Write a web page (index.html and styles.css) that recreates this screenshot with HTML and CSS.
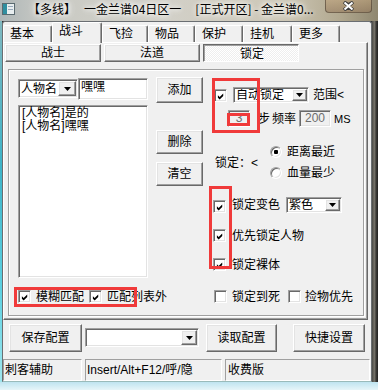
FILE: index.html
```html
<!DOCTYPE html>
<html>
<head>
<meta charset="utf-8">
<link rel="stylesheet" href="styles.css">
</head>
<body>
<div class="win">
  <div class="titlebar">
    <span class="appicon">
      <svg width="13" height="12" viewBox="0 0 13 12"><rect x="0.5" y="0.5" width="12" height="11" fill="#e8eef0" stroke="#5a6a70"/><rect x="1" y="1" width="4" height="10" fill="#2f8ea0"/><rect x="6" y="3" width="5" height="1" fill="#9ab"/><rect x="6" y="6" width="5" height="1" fill="#9ab"/></svg>
    </span>
    <span class="title"><span>【多线】</span><span class="t2">一金兰谱04日区一</span><span class="t3">[正式开区] - 金兰谱0...</span></span>
    <span class="closebtn">
      <svg width="13" height="10" viewBox="0 0 13 10"><path d="M2 1 L6.5 4 L11 1 M2 9 L6.5 6 L11 9 M6.5 5 L2 1 M6.5 5 L11 1 M6.5 5 L2 9 M6.5 5 L11 9" stroke="#3a3a3a" stroke-width="3.4" fill="none"/><path d="M2.5 1.5 L10.5 8.5 M10.5 1.5 L2.5 8.5" stroke="#fff" stroke-width="2" fill="none"/></svg>
    </span>
  </div>
  <div class="mid">
    <div class="glass-l"></div>
    <div class="client">
      <div class="tabs">
        <div class="tab">基本</div>
        <div class="tab sel">战斗</div>
        <div class="tab">飞捡</div>
        <div class="tab">物品</div>
        <div class="tab">保护</div>
        <div class="tab">挂机</div>
        <div class="tab">更多</div>
      </div>
      <div class="panel">
        <div class="btabs">
          <div class="btab raised">战士</div>
          <div class="btab raised">法道</div>
          <div class="btab pressed">锁定</div>
        </div>
        <div class="frame">
          <div class="col-left">
            <div class="row-top">
              <div class="combo combo-name"><span class="combo-text">人物名</span><span class="dd raised"><svg width="7" height="4" viewBox="0 0 7 4"><path d="M0 0H7L3.5 4Z"/></svg></span></div>
              <div class="edit edit-name sunken">嘿嘿</div>
              <div class="btn raised btn-add">添加</div>
            </div>
            <div class="row-list">
              <div class="list sunken">
                <div>[人物名]是的</div>
                <div>[人物名]嘿嘿</div>
              </div>
              <div class="btncol">
                <div class="btn raised btn-side">删除</div>
                <div class="btn raised btn-side">清空</div>
              </div>
            </div>
            <div class="row-match">
              <span class="cb sunken"><svg width="9" height="9" viewBox="0 0 9 9"><polygon points="1,3 3,5 7,1 7,4 3,8 1,6"/></svg></span>
              <span class="lbl m5">模糊匹配</span>
              <span class="cb sunken m5"><svg width="9" height="9" viewBox="0 0 9 9"><polygon points="1,3 3,5 7,1 7,4 3,8 1,6"/></svg></span>
              <span class="lbl m5">匹配列表外</span>
            </div>
          </div>
          <div class="col-right">
            <div class="r-auto">
              <span class="cb sunken cb-auto"><svg width="9" height="9" viewBox="0 0 9 9"><polygon points="1,3 3,5 7,1 7,4 3,8 1,6"/></svg></span>
              <div class="combo combo-auto"><span class="combo-text">自动锁定</span><span class="dd raised"><svg width="7" height="4" viewBox="0 0 7 4"><path d="M0 0H7L3.5 4Z"/></svg></span></div>
              <span class="lbl range">范围&lt;</span>
            </div>
            <div class="r-step">
              <span class="field sunken f-step">3</span>
              <span class="lbl step">步</span>
              <span class="lbl freq">频率</span>
              <span class="field sunken f-freq">200</span>
              <span class="lbl ms">MS</span>
            </div>
            <div class="r-lock">
              <span class="lbl lock-lbl">锁定：&lt;</span>
              <div class="radios">
                <div class="ritem"><span class="radio on"></span><span class="lbl m5">距离最近</span></div>
                <div class="ritem"><span class="radio"></span><span class="lbl m5">血量最少</span></div>
              </div>
            </div>
            <div class="r-color">
              <span class="cb sunken cb-col"><svg width="9" height="9" viewBox="0 0 9 9"><polygon points="1,3 3,5 7,1 7,4 3,8 1,6"/></svg></span>
              <span class="lbl m6">锁定变色</span>
              <div class="combo combo-color"><span class="combo-text">紫色</span><span class="dd raised"><svg width="7" height="4" viewBox="0 0 7 4"><path d="M0 0H7L3.5 4Z"/></svg></span></div>
            </div>
            <div class="r-check">
              <span class="cb sunken cb-col"><svg width="9" height="9" viewBox="0 0 9 9"><polygon points="1,3 3,5 7,1 7,4 3,8 1,6"/></svg></span>
              <span class="lbl m6">优先锁定人物</span>
            </div>
            <div class="r-check">
              <span class="cb sunken cb-col"><svg width="9" height="9" viewBox="0 0 9 9"><polygon points="1,3 3,5 7,1 7,4 3,8 1,6"/></svg></span>
              <span class="lbl m6">锁定裸体</span>
            </div>
            <div class="r-last">
              <span class="cb sunken cb-last"></span>
              <span class="lbl m5">锁定到死</span>
              <span class="cb sunken cb-last2"></span>
              <span class="lbl m4">捡物优先</span>
            </div>
          </div>
          <div class="mark mark1"></div>
          <div class="mark mark2"></div>
          <div class="mark mark3"></div>
          <div class="mark mark4"></div>
        </div>
      </div>
      <div class="bottom">
        <div class="btn raised b-save">保存配置</div>
        <div class="combo combo-cfg"><span class="combo-text"></span><span class="dd raised"><svg width="7" height="4" viewBox="0 0 7 4"><path d="M0 0H7L3.5 4Z"/></svg></span></div>
        <div class="btn raised b-load">读取配置</div>
        <div class="btn raised b-hot">快捷设置</div>
      </div>
      <div class="status">
        <div class="sp sp1">刺客辅助</div>
        <div class="sp sp2">Insert/Alt+F12/呼/隐</div>
        <div class="sp sp3">收费版</div>
      </div>
    </div>
    <div class="glass-r"></div>
  </div>
  <div class="glass-b"></div>
</div>
</body>
</html>
```
FILE: styles.css
```css
* { box-sizing: border-box; margin: 0; padding: 0; }
html, body { width: 378px; height: 390px; overflow: hidden; }
body {
  font: 12px "Liberation Sans", "Noto Sans CJK SC", sans-serif;
  color: #000;
  background: #2b2b2b;
}
.win { width: 378px; height: 390px; display: flex; flex-direction: column; }

/* title bar */
.titlebar {
  height: 21px;
  display: flex;
  align-items: flex-start;
  background: linear-gradient(to right, #aeb6b8 0%, #c9cac4 12%, #d2d0c8 45%, #cdc7b6 75%, #b1a88f 90%, #8f8770 100%);
}
.appicon { margin: 3px 0 0 2px; width: 13px; height: 12px; display: flex; }
.title {
  margin-left: 13px;
  font-family: "Noto Sans CJK SC", sans-serif;
  font-size: 12px;
  line-height: 15px;
  padding-top: 1px;
  white-space: nowrap;
  color: #000;
  text-shadow: 0 0 4px #fff, 0 0 7px rgba(255,255,255,0.9), 0 0 10px rgba(255,255,255,0.7);
}
.title .t2 { margin-left: 8px; }
.title .t3 { margin-left: 14px; }
.closebtn {
  margin-left: auto;
  margin-right: 6px;
  width: 47px;
  height: 13px;
  border: 1px solid rgba(60,50,40,0.55);
  border-top: none;
  border-radius: 0 0 4px 4px;
  background: linear-gradient(rgba(190,160,120,0.55), rgba(150,120,90,0.55));
  display: flex;
  align-items: center;
  justify-content: center;
}

.mid { display: flex; height: 361px; }
.glass-l { width: 2px; background: linear-gradient(#7fb8c0, #3fb4c8 40%, #5fd2e2 75%, #9fe6ee); }
.glass-r { width: 6px; background: linear-gradient(to right, #4a4a46, #76736a 40%, #3a3936 70%, #222); }
.glass-b { height: 8px; background: linear-gradient(#bfe4f0, #e6f5f9); }

.client {
  width: 370px;
  height: 361px;
  background: #f0f0f0;
  border: 1px solid #6a6e72;
  border-bottom-color: #9bb;
  border-radius: 3px 3px 0 0;
  display: flex;
  flex-direction: column;
}

/* classic 3D */
.raised {
  background: #f0f0f0;
  border: 1px solid;
  border-color: #fff #696969 #696969 #fff;
  box-shadow: inset -1px -1px #a0a0a0, inset 1px 1px #e3e3e3;
}
.sunken {
  background: #fff;
  border: 1px solid;
  border-color: #a0a0a0 #fff #fff #a0a0a0;
  box-shadow: inset 1px 1px #696969, inset -1px -1px #e3e3e3;
}

/* outer tabs */
.tabs { display: flex; height: 21px; align-items: flex-end; }
.tab {
  height: 18px;
  padding-left: 6px;
  line-height: 16px;
  border: 1px solid;
  border-bottom: none;
  border-color: #fff #696969 #fff #fff;
  box-shadow: inset -1px 0 #a0a0a0;
  border-radius: 2px 2px 0 0;
  background: #f0f0f0;
}
.tab:nth-child(1) { width: 49px; }
.tab:nth-child(2) { width: 50px; }
.tab:nth-child(3) { width: 46px; }
.tab:nth-child(4) { width: 47px; }
.tab:nth-child(5) { width: 48px; }
.tab:nth-child(6) { width: 49px; }
.tab:nth-child(7) { width: 48px; }
.tab.sel { height: 21px; position: relative; z-index: 2; padding-left: 6px; }

.panel {
  margin-top: -1px;
  width: 365px;
  height: 278px;
  border: 1px solid;
  border-color: #fff #696969 #696969 #fff;
  box-shadow: inset -1px -1px #a0a0a0;
  position: relative;
  z-index: 1;
}

.btabs { display: flex; gap: 3px; margin: 1px 0 0 1px; height: 18px; }
.btab {
  width: 96px;
  height: 18px;
  display: flex;
  align-items: center;
  justify-content: center;
  line-height: 14px;
}
.btab.pressed {
  border: 1px solid;
  border-color: #696969 #fff #fff #696969;
  box-shadow: inset 1px 1px #a0a0a0;
  background: repeating-conic-gradient(#ffffff 0 25%, #eeeeee 0 50%) 0 0 / 2px 2px;
  padding-top: 2px;
  padding-left: 2px;
}

/* frame */
.frame {
  margin: 7px 0 0 4px;
  width: 356px;
  height: 247px;
  border: 1px solid #a0a0a0;
  box-shadow: inset 1px 1px #fff, 1px 1px #fff;
  display: flex;
  position: relative;
}
.col-left { width: 203px; padding: 7px 0 0 9px; display: flex; flex-direction: column; }
.col-right { flex: 1; display: flex; flex-direction: column; }

.lbl { white-space: nowrap; line-height: 14px; }
.m4 { margin-left: 4px; }
.m5 { margin-left: 5px; }
.m6 { margin-left: 6px; }

.btn { display: flex; align-items: center; justify-content: center; line-height: 14px; }

.combo {
  display: flex;
  background: #fff;
  border: 1px solid;
  border-color: #a0a0a0 #fff #fff #a0a0a0;
  box-shadow: inset 1px 1px #696969, inset -1px -1px #e3e3e3;
  padding: 1px;
  overflow: hidden;
}
.combo-text { flex: 1; padding-left: 1px; white-space: nowrap; overflow: hidden; line-height: 14px; display: flex; align-items: center; }
.dd { display: flex; align-items: center; justify-content: center; flex: none; }
.dd svg { display: block; }

.row-top { display: flex; height: 26px; align-items: flex-start; }
.combo-name { margin-top: 2px; width: 60px; height: 19px; }
.combo-name .dd { width: 18px; }
.edit-name { margin-top: 1px; width: 70px; height: 22px; padding: 1px 2px; line-height: 14px; }
.btn-add { margin-left: 8px; width: 47px; height: 26px; }

.row-list { display: flex; margin-top: 2px; }
.list { width: 130px; height: 173px; padding: 1px 3px; line-height: 13px; }
.btncol { margin-left: 8px; padding-top: 25px; display: flex; flex-direction: column; gap: 8px; }
.btn-side { width: 47px; height: 24px; }

.row-match { display: flex; align-items: center; margin-top: 12px; height: 13px; }

.cb { width: 13px; height: 13px; flex: none; padding: 1px; display: flex; }
.cb svg { display: block; margin: 1px 0 0 1px; }

.r-auto { display: flex; margin-top: 17px; height: 16px; align-items: flex-start; }
.cb-auto { margin: 2px 0 0 2px; }
.combo-auto { margin-left: 6px; width: 76px; height: 16px; }
.combo-auto .dd { width: 15px; }
.range { margin-left: 4px; line-height: 16px; }

.r-step { display: flex; margin-top: 7px; height: 17px; align-items: center; }
.field {
  height: 17px;
  background: #f0f0f0;
  color: #6d6d6d;
  display: flex;
  align-items: center;
  justify-content: center;
  line-height: 13px;
}
.f-step { margin-left: 16px; width: 22px; }
.step { margin-left: 8px; }
.freq { margin-left: 2px; }
.f-freq { margin-left: 3px; width: 32px; }
.ms { margin-left: 3px; font-size: 11px; }

.r-lock { display: flex; align-items: center; margin-top: 19px; }
.lock-lbl { margin-left: 3px; width: 55px; }
.radios { display: flex; flex-direction: column; gap: 9px; }
.ritem { display: flex; align-items: center; height: 12px; }
.radio {
  width: 12px;
  height: 12px;
  border-radius: 50%;
  border: 1px solid;
  border-color: #a0a0a0 #fff #fff #a0a0a0;
  box-shadow: inset 1px 1px #696969, inset -1px -1px #e3e3e3;
  background: #fff;
  position: relative;
  flex: none;
}
.radio.on::after {
  content: "";
  position: absolute;
  left: 3px;
  top: 3px;
  width: 4px;
  height: 4px;
  border-radius: 1px;
  background: #000;
}

.r-color { display: flex; margin-top: 18px; height: 16px; align-items: flex-start; }
.r-color .lbl { line-height: 16px; }
.cb-col { margin: 3px 0 0 1px; }
.r-color .cb-col { margin-top: 3px; }
.combo-color { margin-left: 6px; width: 56px; height: 16px; }
.combo-color .dd { width: 15px; }

.r-check { display: flex; margin-top: 16px; height: 13px; align-items: center; }
.r-check .cb-col { margin-top: 0; }

.r-last { display: flex; margin-top: 19px; height: 13px; align-items: center; }
.cb-last { margin-left: 2px; }
.cb-last2 { margin-left: 8px; }

/* red annotation marks (overlay) */
.mark { position: absolute; border: 3px solid #f03a3a; pointer-events: none; }
.mark1 { left: 203px; top: 8px; width: 48px; height: 55px; }
.mark2 { left: 218px; top: 43px; width: 23px; height: 13px; }
.mark3 { left: 200px; top: 116px; width: 23px; height: 83px; }
.mark4 { left: 5px; top: 217px; width: 123px; height: 20px; }

/* bottom buttons */
.bottom { display: flex; align-items: flex-start; margin-top: 4px; height: 28px; }
.b-save { margin-left: 6px; width: 73px; height: 28px; }
.combo-cfg { margin: 4px 0 0 3px; width: 114px; height: 19px; }
.combo-cfg .dd { width: 16px; }
.b-load { margin-left: 7px; width: 71px; height: 28px; }
.b-hot { margin-left: 16px; width: 72px; height: 28px; }

/* status bar */
.status { display: flex; gap: 3px; margin-top: 7px; height: 22px; }
.sp {
  height: 22px;
  border: 1px solid;
  border-color: #a0a0a0 #fff #fff #a0a0a0;
  padding-left: 1px;
  line-height: 20px;
  white-space: nowrap;
  overflow: hidden;
}
.sp1 { width: 79px; }
.sp2 { width: 137px; }
.sp3 { width: 145px; padding-left: 2px; }
```
